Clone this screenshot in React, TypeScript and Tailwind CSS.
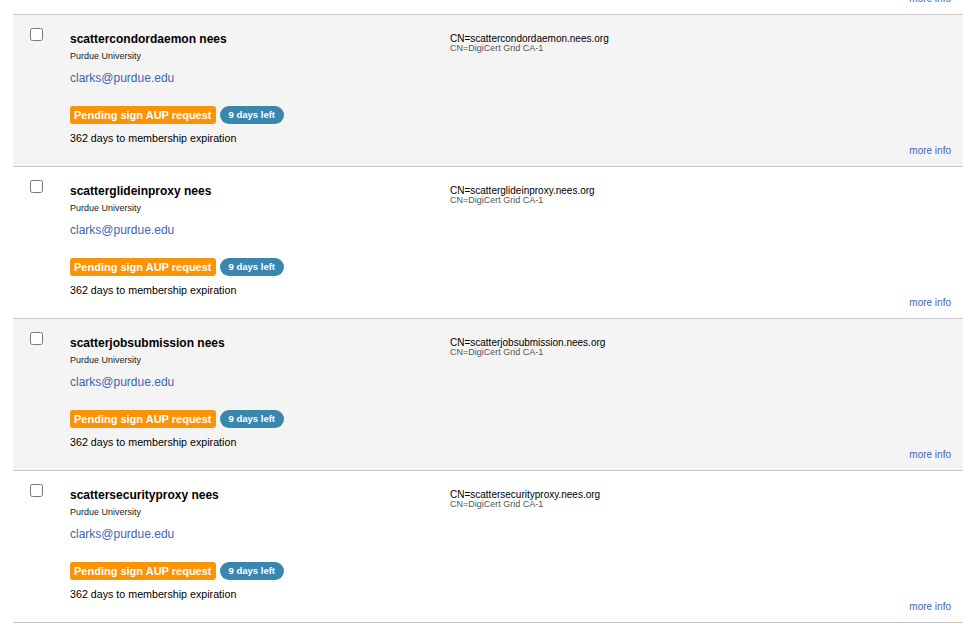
import React from "react";

type Member = {
  id: string;
  name: string;
  org: string;
  email: string;
  dn: string;
  ca: string;
};

const members: Member[] = [
  {
    id: "condor",
    name: "scattercondordaemon nees",
    org: "Purdue University",
    email: "clarks@purdue.edu",
    dn: "CN=scattercondordaemon.nees.org",
    ca: "CN=DigiCert Grid CA-1",
  },
  {
    id: "glidein",
    name: "scatterglideinproxy nees",
    org: "Purdue University",
    email: "clarks@purdue.edu",
    dn: "CN=scatterglideinproxy.nees.org",
    ca: "CN=DigiCert Grid CA-1",
  },
  {
    id: "jobsub",
    name: "scatterjobsubmission nees",
    org: "Purdue University",
    email: "clarks@purdue.edu",
    dn: "CN=scatterjobsubmission.nees.org",
    ca: "CN=DigiCert Grid CA-1",
  },
  {
    id: "security",
    name: "scattersecurityproxy nees",
    org: "Purdue University",
    email: "clarks@purdue.edu",
    dn: "CN=scattersecurityproxy.nees.org",
    ca: "CN=DigiCert Grid CA-1",
  },
];

const MoreInfo = () => (
  <a href="#" className="mr-[12px] mb-[9px] self-end text-[10px] leading-[12px] text-[#3f64b0]">
    more info
  </a>
);

const MemberRow = ({ member, striped }: { member: Member; striped: boolean }) => (
  <div
    className={`flex h-[152px] border-b border-[#c8c8c8] ${striped ? "bg-[#f4f4f4]" : "bg-white"}`}
  >
    <div className="w-[57px] shrink-0 pt-[13px] pl-[17px]">
      <input type="checkbox" className="m-0 block h-[13px] w-[13px]" />
    </div>

    <div className="w-[380px] shrink-0 pt-[16px] text-black">
      <div className="text-[12px] leading-[16px] font-bold">{member.name}</div>
      <div className="mt-[3px] text-[9px] leading-[12px] text-[#222]">{member.org}</div>
      <a href="#" className="mt-[8px] block text-[12px] leading-[16px] text-[#3f64b0]">
        {member.email}
      </a>
      <div className="mt-[20px] flex items-center gap-[4px]">
        <span className="h-[18px] rounded-[3px] bg-[#f89406] px-[4px] text-[11px] leading-[18px] font-bold text-white">
          Pending sign AUP request
        </span>
        <span className="h-[18px] rounded-[9px] bg-[#3a87ad] px-[9px] text-[9.5px] leading-[18px] font-bold text-white">
          9 days left
        </span>
      </div>
      <div className="mt-[7px] text-[10.7px] leading-[14px]">362 days to membership expiration</div>
    </div>

    <div className="flex flex-1 flex-col pt-[19px]">
      <div className="text-[10px] leading-[10px] text-black">{member.dn}</div>
      <div className="text-[9px] leading-[9px] text-[#555]">{member.ca}</div>
      <div className="mt-auto flex flex-col">
        <MoreInfo />
      </div>
    </div>
  </div>
);

export default function App() {
  return (
    <div
      className="h-[624px] w-[980px] overflow-hidden bg-white"
      style={{ fontFamily: '"Liberation Sans", Arial, sans-serif' }}
    >
      <div className="ml-[13px] w-[950px]">
        {/* tail of the row scrolled above */}
        <div className="flex h-[15px] flex-col justify-end border-b border-[#c8c8c8] bg-white">
          <MoreInfo />
        </div>
        {members.map((m, i) => (
          <MemberRow key={m.id} member={m} striped={i % 2 === 0} />
        ))}
      </div>
    </div>
  );
}
